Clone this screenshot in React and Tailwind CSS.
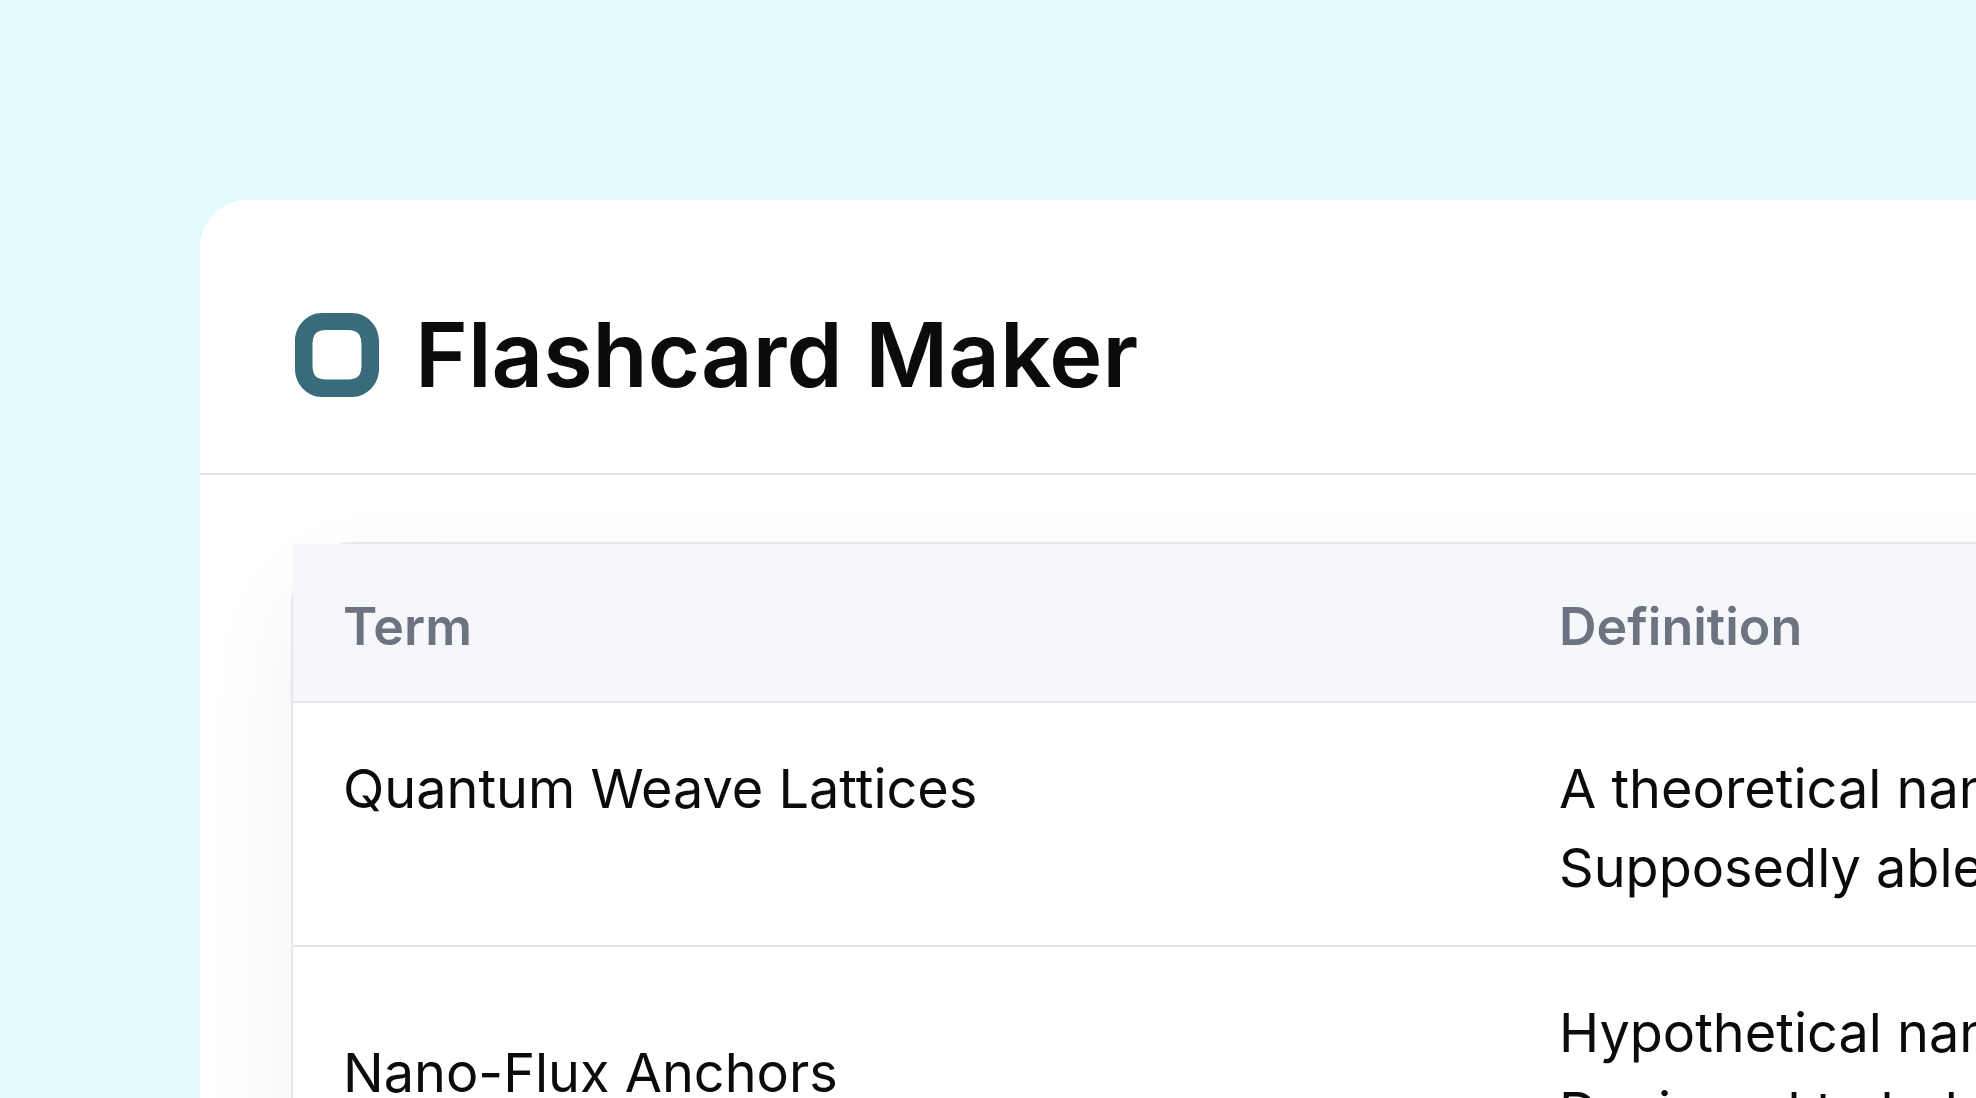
const rows = [
  {
    term: "Quantum Weave Lattices",
    lines: ["A theoretical nanomaterial.", "Supposedly able to bend light."],
    align: "align-top",
  },
  {
    term: "Nano-Flux Anchors",
    lines: ["Hypothetical nanodevices.", "Designed to hold fields."],
    align: "align-middle",
  },
];

function Logo() {
  return (
    <svg viewBox="0 0 84 84" className="size-[84px] shrink-0" aria-hidden="true">
      <path
        fill="#3a6b7b"
        fillRule="evenodd"
        d="M27 0H57C72 0 84 13 84 28V56C84 71 72 84 57 84H27C12 84 0 71 0 56V28C0 13 12 0 27 0ZM31 17C21 17.500 18 21 17.500 31V53C18 63 21 66 31 66.500H53C63 66 66 63 66.500 53V31C66 21 63 17.500 53 17Z"
      />
    </svg>
  );
}

export default function App() {
  return (
    <div className="h-screen overflow-hidden bg-[#e3f9fc] pt-[200px] pl-[200px] font-['Inter',sans-serif] text-[#0b0b0c]">
      <main className="min-h-full w-max min-w-full rounded-tl-[48px] bg-white">
        <header className="flex items-center gap-9 border-b-2 border-[#e6e6eb] pt-[99px] pr-24 pb-[62px] pl-[95px]">
          <Logo />
          <h1 className="text-[90px] leading-[112px] font-semibold">Flashcard Maker</h1>
        </header>
        <section className="pt-[67px] pr-24 pl-[91px]">
          <div className="rounded-[64px] border-2 border-[#e6e6eb] bg-white shadow-[0_40px_100px_rgba(0,0,0,0.06)]">
            <table className="w-full border-collapse text-left">
              <thead>
                <tr className="border-b-2 border-[#e6e6eb] bg-[#f6f7fb] text-[52px] leading-[76px] text-[#6d7380]">
                  <th className="w-[1216px] px-[50px] pt-[45px] pb-9 font-semibold">Term</th>
                  <th className="px-[50px] pt-[45px] pb-9 font-semibold">Definition</th>
                </tr>
              </thead>
              <tbody className="text-[54px] leading-[79px]">
                {rows.map((row) => (
                  <tr key={row.term} className="border-b-2 border-[#e6e6eb]">
                    <td className={`w-[1216px] px-[50px] pt-[46px] pb-[38px] ${row.align}`}>{row.term}</td>
                    <td className="px-[50px] pt-[46px] pb-[38px] whitespace-nowrap">
                      {row.lines.map((line) => (
                        <p key={line}>{line}</p>
                      ))}
                    </td>
                  </tr>
                ))}
              </tbody>
            </table>
          </div>
        </section>
      </main>
    </div>
  );
}
